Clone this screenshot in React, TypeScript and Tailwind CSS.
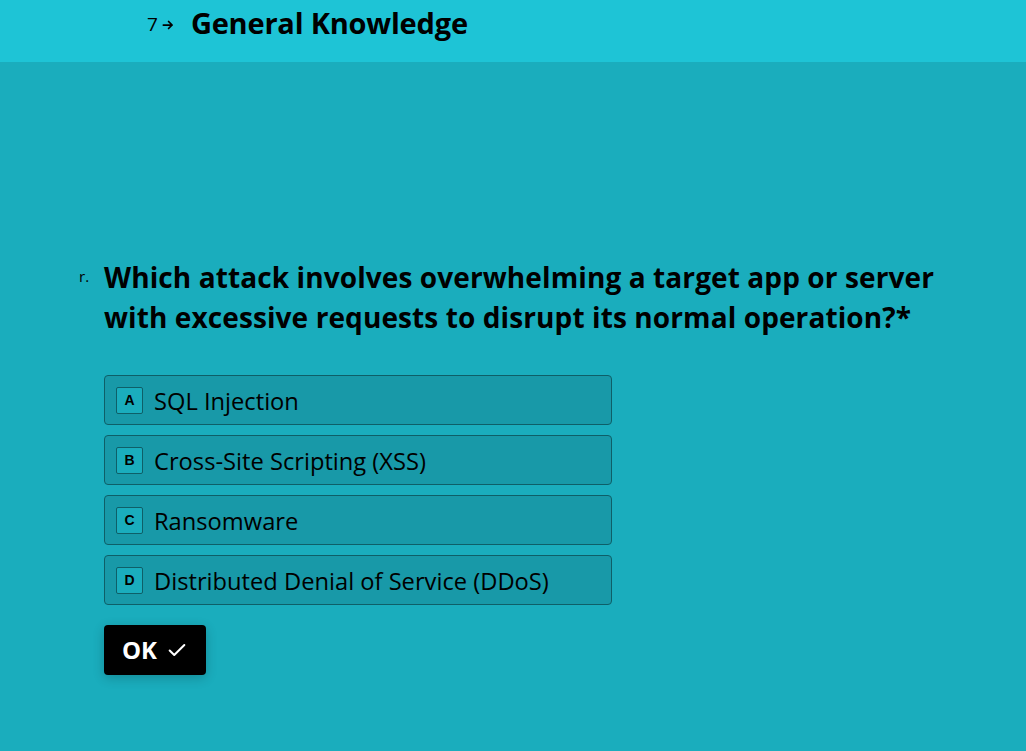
import React from "react";

const options = [
  { key: "A", label: "SQL Injection" },
  { key: "B", label: "Cross-Site Scripting (XSS)" },
  { key: "C", label: "Ransomware" },
  { key: "D", label: "Distributed Denial of Service (DDoS)" },
];

export default function App() {
  return (
    <div
      className="flex h-[751px] w-full flex-col bg-[#1aadbd] text-black"
      style={{ fontFamily: '"Open Sans", "Noto Sans", sans-serif' }}
    >
      <header className="flex h-[62px] shrink-0 items-start bg-[#1ec4d6] pl-[147px] pt-[3px]">
        <span className="mt-[12px] flex items-center text-[19px] leading-none">
          7
          <svg viewBox="0 0 24 24" className="ml-[3px] h-[14px] w-[14px]" fill="none" stroke="currentColor" strokeWidth="3" strokeLinecap="round" strokeLinejoin="round">
            <path d="M4 12h15M13 6l6 6-6 6" />
          </svg>
        </span>
        <h1 className="ml-[16px] text-[29px] font-bold leading-[40px] tracking-[-0.2px]">General Knowledge</h1>
      </header>

      <main className="flex flex-col pl-[79px] pt-[195px]">
        <div className="flex">
          <span className="mt-[12px] w-[25px] text-[15px] leading-none">r.</span>
          <h2 className="w-[848px] text-[28px] font-bold leading-[40px] tracking-[0.1px]">
            Which attack involves overwhelming a target app or server with excessive requests to disrupt its normal operation?*
          </h2>
        </div>

        <div className="ml-[25px] mt-[38px] flex w-[508px] flex-col gap-[10px]">
          {options.map((o) => (
            <div
              key={o.key}
              className="flex h-[50px] items-center rounded-[4px] border border-[#0e5f68] bg-[#1899a8] pl-[11px]"
            >
              <span
                className="flex h-[27px] w-[27px] items-center justify-center rounded-[2px] border border-[#0e5f68] bg-[#1aadbd] text-[14px] font-bold"
                style={{ fontFamily: '"Liberation Sans", Arial, sans-serif' }}
              >
                {o.key}
              </span>
              <span className="ml-[11px] mt-[3px] text-[23.7px]">{o.label}</span>
            </div>
          ))}
        </div>

        <button className="ml-[25px] mt-[20px] flex h-[50px] w-[102px] items-center justify-center gap-[9px] rounded-[4px] bg-black text-white shadow-[0_3px_12px_rgba(0,0,0,0.2)]">
          <span className="text-[24px] font-bold">OK</span>
          <svg viewBox="0 0 24 24" className="h-[22px] w-[22px]" fill="none" stroke="currentColor" strokeWidth="2.2" strokeLinecap="round" strokeLinejoin="round">
            <path d="M4 12.5l5 5L20 6.5" />
          </svg>
        </button>
      </main>
    </div>
  );
}
